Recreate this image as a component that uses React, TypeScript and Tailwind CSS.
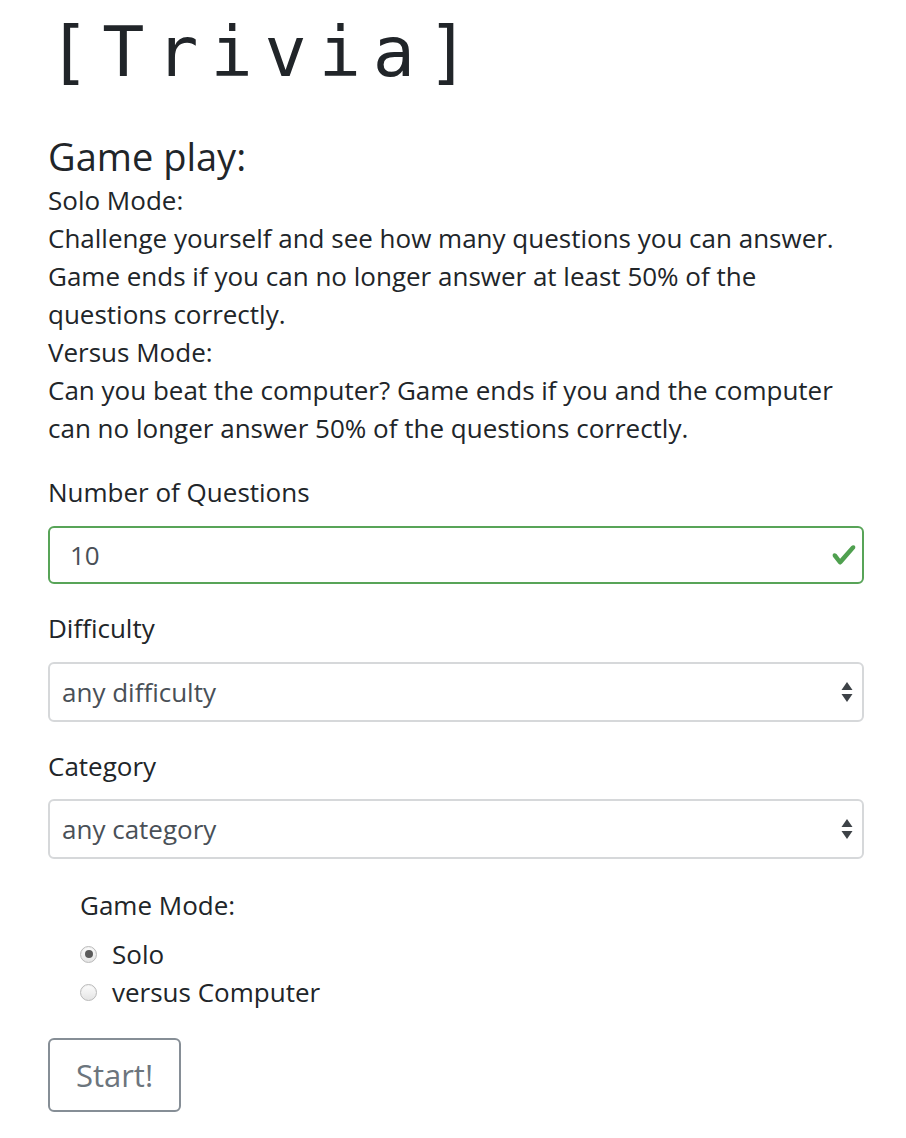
import {useState} from 'react';

const body = "font-['Open_Sans',sans-serif]";

function SelectArrows() {
  return (
    <svg width="12" height="22" viewBox="0 0 12 22" className="shrink-0">
      <path d="M6 1 L11.5 9 L0.5 9 Z" fill="#3d4247" />
      <path d="M6 21 L11.5 13 L0.5 13 Z" fill="#3d4247" />
    </svg>
  );
}

function Radio({checked, label, onClick}: {checked: boolean; label: string; onClick: () => void}) {
  return (
    <button type="button" onClick={onClick} className="flex items-center h-[38px] text-left">
      <span className="w-[17px] h-[17px] rounded-full border border-[#b9b9b9] bg-gradient-to-b from-[#fdfdfd] to-[#e4e4e4] flex items-center justify-center shadow-[inset_0_1px_1px_rgba(0,0,0,0.05)]">
        {checked && <span className="w-[8px] h-[8px] rounded-full bg-[#5a5a5a]" />}
      </span>
      <span className="ml-[15px] text-[26px] text-[#212529]">{label}</span>
    </button>
  );
}

export default function App() {
  const [mode, setMode] = useState('solo');

  return (
    <div className={`${body} bg-white min-h-[1138px] pl-[48px] pr-[42px] text-[#212529]`}>
      <h1 className="pt-[14px] h-[96px] font-['DejaVu_Sans_Mono',monospace] text-[70px] leading-[76px] tracking-[12px] text-[#212529]">
        [Trivia]
      </h1>

      <div className="mt-[37px] text-[26px] leading-[38px]">
        <h2 className="text-[38px] leading-[46px] font-medium mb-[2px]">Game play:</h2>
        <p>Solo Mode:</p>
        <p>
          Challenge yourself and see how many questions you can answer. Game ends if you can no longer answer at least 50% of the questions correctly.
        </p>
        <p>Versus Mode:</p>
        <p>Can you beat the computer? Game ends if you and the computer can no longer answer 50% of the questions correctly.</p>
      </div>

      <div className="mt-[26px] text-[26px] leading-[38px]">
        <label className="block">Number of Questions</label>
        <div className="mt-[15px] h-[58px] rounded-[6px] border-2 border-[#58a458] flex items-center justify-between pl-[20px] pr-[4px] text-[#495057]">
          <span>10</span>
          <svg width="28" height="26" viewBox="0 0 8 8">
            <path fill="#4fa04f" d="M2.3 6.73L.6 4.53c-.4-1.04.46-1.4 1.1-.8l1.1 1.4 3.4-3.8c.6-.63 1.6-.27 1.2.7l-4 4.6c-.43.5-.8.4-1.1.1z" />
          </svg>
        </div>

        <label className="block mt-[25px]">Difficulty</label>
        <div className="mt-[15px] h-[60px] rounded-[6px] border-2 border-[#d6d8da] flex items-center justify-between pl-[12px] pr-[9px] text-[#495057]">
          <span>any difficulty</span>
          <SelectArrows />
        </div>

        <label className="block mt-[25px]">Category</label>
        <div className="mt-[14px] h-[60px] rounded-[6px] border-2 border-[#d6d8da] flex items-center justify-between pl-[12px] pr-[9px] text-[#495057]">
          <span>any category</span>
          <SelectArrows />
        </div>

        <div className="pl-[32px] mt-[27px]">
          <p>Game Mode:</p>
          <div className="mt-[11px] flex flex-col items-start">
            <Radio checked={mode === 'solo'} label="Solo" onClick={() => setMode('solo')} />
            <Radio checked={mode === 'versus'} label="versus Computer" onClick={() => setMode('versus')} />
          </div>
        </div>

        <button className="mt-[27px] h-[74px] w-[133px] rounded-[6px] border-2 border-[#868e96] text-[#6c757d] text-[31px]">
          Start!
        </button>
      </div>
    </div>
  );
}
